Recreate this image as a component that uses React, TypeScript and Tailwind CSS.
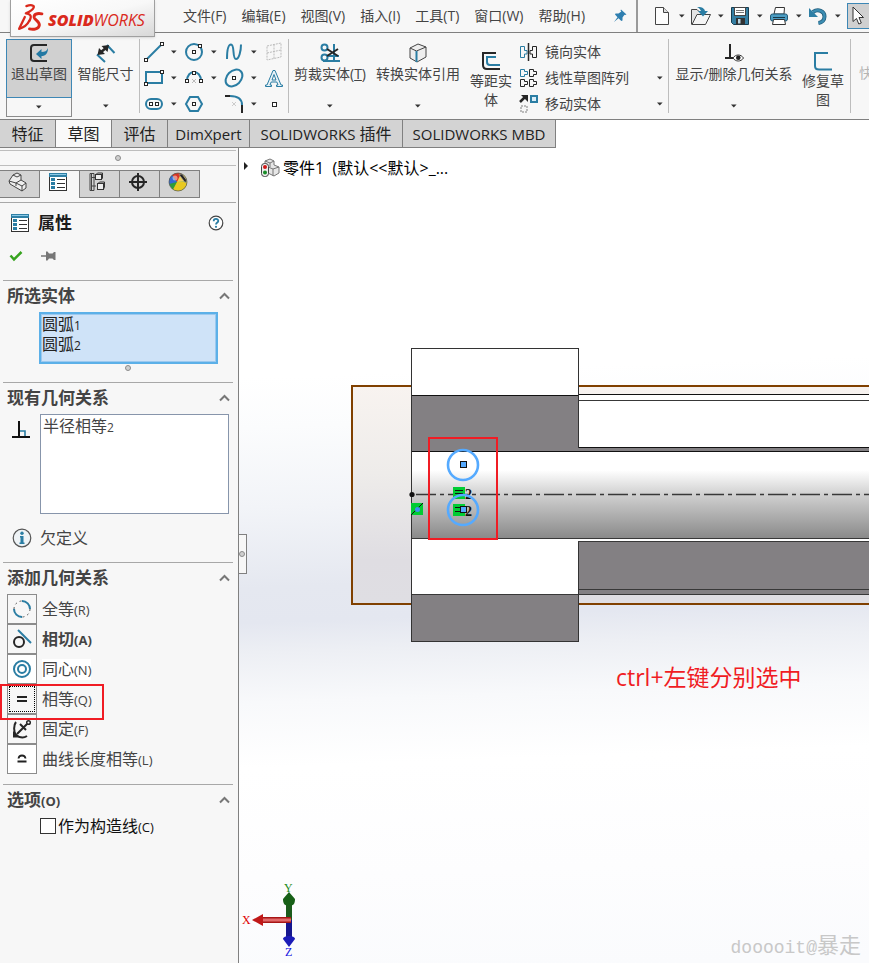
import type { ReactNode } from "react";

const BLUE = "#2a7da3";
const DARK = "#262626";

function Icon({ children, size = 20, label }: { children: ReactNode; size?: number; label?: string }) {
  return (
    <svg width={size} height={size} viewBox="0 0 20 20" fill="none" className="shrink-0" role="img" aria-label={label}>
      {children}
    </svg>
  );
}

/** Small square handle used on sketch entities. */
function Pt({ x, y }: { x: number; y: number }) {
  return <rect x={x - 1.5} y={y - 1.5} width="3" height="3" fill="#fff" stroke={DARK} />;
}

function Caret() {
  return (
    <svg width="6" height="4" viewBox="0 0 6 4" className="shrink-0">
      <path d="M0 0.5H5.6L2.8 3.5Z" fill="#333" />
    </svg>
  );
}

function Dot() {
  return <span className="block size-[6px] rounded-full border border-[#8c8c8c] bg-[#cfcfcf]" />;
}

/* ---------- Icons ---------- */

const newDoc = (
  <Icon>
    <path d="M3.5 1.5H11.5L16.5 6.5V18.5H3.5Z" fill="#fdfdfd" stroke="#444" />
    <path d="M11.5 1.5V6.5H16.5" fill="#ddd" stroke="#444" />
  </Icon>
);
const openDoc = (
  <Icon>
    <path d="M.5 18.5V3.5H6L8 5.5H13.5V8" fill="#e4e4e4" stroke="#444" />
    <path d="M1 18.5L6 8.5H19.5L14.5 18.5Z" fill="#f5f5f5" stroke="#444" />
    <path d="M6 1C10 .5 13.500 2 14 5H17L12 10.500L7 5H10C9.500 3.500 8 2 6 1Z" fill={BLUE} />
  </Icon>
);
const saveDoc = (
  <Icon>
    <path d="M1.500 1.500H18.500V18.500H3.500L1.500 16.500Z" fill="#357fa3" stroke="#173d50" />
    <rect x="4.500" y="1.500" width="11" height="8" fill="#fff" stroke="#444" />
    <path d="M6 4.500H14M6 6.500H14" stroke="#777" />
    <rect x="6" y="12" width="9" height="6.500" fill="#333" />
    <rect x="8" y="13" width="2.500" height="4.500" fill="#b9d6e4" />
  </Icon>
);
const printDoc = (
  <Icon>
    <path d="M5 8L6.500 1.500H15.500L15 8Z" fill="#fff" stroke="#333" />
    <rect x="1.500" y="8" width="17" height="7" rx="2" fill="#4b9cc2" stroke="#235a76" />
    <path d="M4 11.500H16" stroke="#16384a" />
    <path d="M4.500 13.500H15.500L16.500 18.500H3.500Z" fill="#fff" stroke="#333" />
  </Icon>
);
const undo = (
  <Icon>
    <path d="M5 6C10 2.500 16.500 5 16.500 10.500C16.500 14 14 16.500 10.500 17" stroke="#235f7e" strokeWidth="4" />
    <path d="M5 6C10 2.500 16.500 5 16.500 10.500C16.500 14 14 16.500 10.500 17" stroke="#3c8db2" strokeWidth="2.400" />
    <path d="M1 2V11H10Z" fill="#2f7fa5" />
  </Icon>
);
const pointer = (
  <Icon>
    <path d="M5 1V15.500L8.500 12.500L10.800 18L13.300 17L11 11.500H15.500Z" fill="#fff" stroke="#333" />
  </Icon>
);

const line = (
  <Icon>
    <path d="M2 18L18 2" stroke={BLUE} strokeWidth="2" />
    <Pt x={2} y={18} />
    <Pt x={18} y={2} />
  </Icon>
);
const rectangle = (
  <Icon>
    <path d="M2 4H18V15H2Z" stroke={BLUE} strokeWidth="2" />
    <Pt x={2} y={16} />
    <Pt x={18} y={4} />
  </Icon>
);
const slot = (
  <Icon>
    <rect x="2" y="5" width="16" height="10" rx="5" stroke={BLUE} strokeWidth="2" />
    <Pt x={7} y={10} />
    <Pt x={13} y={10} />
  </Icon>
);
const circle = (
  <Icon>
    <circle cx="10" cy="10" r="8" stroke={BLUE} strokeWidth="2" />
    <Pt x={10} y={10} />
    <Pt x={16} y={4} />
  </Icon>
);
const arc = (
  <Icon>
    <path d="M3 13C3 1 17 1 17 13" stroke={BLUE} strokeWidth="2" />
    <path d="M8 11L12 15M12 11L8 15" stroke="#bbb" />
    <Pt x={3} y={13} />
    <Pt x={17} y={13} />
    <Pt x={10} y={5} />
  </Icon>
);
const polygon = (
  <Icon>
    <path d="M2 10L6 3H14L18 10L14 17H6Z" stroke={BLUE} strokeWidth="2" />
    <Pt x={10} y={10} />
  </Icon>
);
const spline = (
  <Icon>
    <path d="M3 17C3 10 4 2.500 7 2.500C11 2.500 8 17 12 17C15 17 17 9 17 2.500" stroke={BLUE} strokeWidth="2" />
  </Icon>
);
const ellipse = (
  <Icon>
    <ellipse cx="10" cy="10" rx="9.600" ry="7" transform="rotate(-45 10 10)" stroke={BLUE} strokeWidth="2" />
    <Pt x={10} y={10} />
  </Icon>
);
const fillet = (
  <Icon>
    <path d="M1 2H6" stroke={DARK} strokeWidth="2" />
    <path d="M6 2C14 2 18 5 18 11" stroke={BLUE} strokeWidth="2" />
    <path d="M18 11V19" stroke={DARK} strokeWidth="2" />
    <path d="M8 8L12 12M12 8L8 12" stroke="#ccc" />
  </Icon>
);
const planeIcon = (
  <Icon>
    <path d="M3 4L17 1V15L3 18ZM10 2.500V16.500M3 11L17 8" stroke="#bbb" strokeDasharray="2 1" />
  </Icon>
);
const textIcon = (
  <Icon>
    <path
      fillRule="evenodd"
      d="M9 2.500H11L17 17H18.500V18.500H12.500V17H14L12.800 14H7.200L6 17H7.500V18.500H1.500V17H3ZM8 12H12L10 6.500Z"
      fill="#e9f2f7"
      stroke={BLUE}
    />
  </Icon>
);
const pointIcon = (
  <Icon>
    <rect x="8.500" y="8.500" width="4" height="4" fill="#fff" stroke={DARK} />
  </Icon>
);

const exitSketch = (
  <Icon>
    <path d="M18 2H5C3 2 2 3 2 5V15C2 17 3 18 5 18H18" stroke={DARK} strokeWidth="2" />
    <path d="M19 5C19 10.500 16.500 13 12.500 13V16L7 11L12.500 6V9C15.500 9 18 8 19 5Z" fill="#2278a3" />
  </Icon>
);
const dimension = (
  <Icon>
    <path d="M1 11.500L9 19M11 2L18.500 10" stroke={BLUE} strokeWidth="2" />
    <path d="M4 10L11 4" stroke={DARK} strokeWidth="2.500" />
    <path d="M1.500 12L3 5L9 11ZM13 2L11.500 9L5.500 3Z" fill={DARK} />
  </Icon>
);
const trim = (
  <Icon>
    <path d="M14 1V19M3 18H20M8 13H19" stroke={BLUE} strokeWidth="2" />
    <circle cx="4.500" cy="4.500" r="3" stroke={BLUE} strokeWidth="2" />
    <circle cx="4.500" cy="14.500" r="3" stroke={BLUE} strokeWidth="2" />
    <path d="M7 6L18 13M7 13L18 6" stroke={DARK} strokeWidth="2" />
  </Icon>
);
const convert = (
  <Icon>
    <path d="M2 5L10 1L18 4V14L9 19L2 15Z" fill="#eee" stroke="#444" />
    <path d="M2 5L8.500 8L18 4" stroke="#444" />
    <path d="M8.500 8V19" stroke={BLUE} strokeWidth="2" />
  </Icon>
);
const offset = (
  <Icon>
    <path d="M15 2H2V14C2 17 4 18 6 18H19" stroke={DARK} strokeWidth="2" />
    <path d="M15 6H6V11C6 13 7 14 9 14H19" stroke={BLUE} strokeWidth="2" />
  </Icon>
);
const repair = (
  <Icon>
    <path d="M15 2H2V15C2 17.500 3.500 18.500 6 18.500H19" stroke={BLUE} strokeWidth="2" />
  </Icon>
);
const mirror = (
  <Icon>
    <path d="M1.500 4.500H5.500V8.500H8V12H5.500V15.500H1.500Z" stroke={BLUE} />
    <path d="M9.500 1V19" stroke={DARK} strokeWidth="1.500" />
    <path d="M17.500 4.500H13.500V8.500H11V12H13.500V15.500H17.500Z" stroke={DARK} />
  </Icon>
);
const pattern = (
  <Icon>
    <path d="M1.500 1.500H5.500V3.500H8.500V6.500H5.500V8.500H1.500Z" stroke={BLUE} />
    <path
      d="M10.500 1.500H14.500V3.500H17.500V6.500H14.500V8.500H10.500ZM1.500 11.500H5.500V13.500H8.500V16.500H5.500V18.500H1.500ZM10.500 11.500H14.500V13.500H17.500V16.500H14.500V18.500H10.500Z"
      stroke={DARK}
    />
  </Icon>
);
const move = (
  <Icon>
    <path d="M1 8L6 3" stroke={DARK} strokeWidth="2.500" />
    <path d="M2 1H9V8Z" fill={DARK} />
    <rect x="12" y="2" width="6" height="6" fill="#d9edf7" stroke={BLUE} strokeWidth="2" />
    <rect x="2" y="12" width="6" height="6" stroke="#bbb" strokeWidth="2" strokeDasharray="2 1" />
  </Icon>
);
const relations = (
  <Icon>
    <path d="M6 1V15M1 15H9" stroke={DARK} strokeWidth="2" />
    <path d="M9 15C11.500 11 17 11 19.500 15C17 19 11.500 19 9 15Z" fill="#fff" stroke="#333" />
    <circle cx="14.300" cy="14.800" r="2.300" fill="#222" />
  </Icon>
);

const partIcon = (
  <Icon>
    <path d="M1 9L5 3L9 1L13 3V8L18 11V16L14 19L2 12Z" fill="#eee" stroke="#444" />
    <path d="M1 9L8 11L13 8M8 11V14M5 3L9 5L13 3M8 11L14 14L18 11M14 14V19" stroke="#444" />
  </Icon>
);
const listIcon = (
  <Icon>
    <rect x="1.500" y="1.500" width="17" height="17" fill="#fff" stroke="#333" />
    <rect x="1" y="1" width="18" height="4" fill="#2f80a6" />
    <path d="M2 2.500H18" stroke="#8cc9e6" />
    <path d="M3 7.500H7M3 11.500H7M3 15.500H7" stroke={BLUE} strokeWidth="3" />
    <path d="M9 7.500H17M9 11.500H17M9 15.500H17" stroke="#333" />
  </Icon>
);
const configIcon = (
  <Icon>
    <path d="M3.500 1V18.500M3.500 5.500H7M3.500 14H8M2 1.500H6V18.500H2Z" stroke="#444" />
    <rect x="7.500" y="2.500" width="6" height="5" fill="#eee" stroke="#333" />
    <path d="M8 2.500L9.500 1H14.500V6L13.500 7.500" stroke="#333" />
    <rect x="9.500" y="11.500" width="6" height="6" fill="#eee" stroke="#333" />
    <path d="M10 11.500L11.500 10H16.500V15.500L15.500 17" stroke="#333" />
  </Icon>
);
const targetIcon = (
  <Icon>
    <circle cx="10" cy="10" r="6" stroke={DARK} strokeWidth="2" />
    <path d="M10 1V19M1 10H19" stroke={DARK} strokeWidth="2" />
  </Icon>
);
const appearanceIcon = (
  <Icon>
    <circle cx="10" cy="10" r="9" fill="#2e9c3a" />
    <path d="M9 10L8 1.200A9 9 0 0 1 19 9.500Z" fill="#f0cf5a" />
    <path d="M9 10L4 3.300A9 9 0 0 1 13 1.500Z" fill="#d63425" />
    <path d="M9 10L1.200 12A9 9 0 0 1 4 3.300Z" fill="#3569d4" />
    <path d="M9 10L19 10A9 9 0 0 1 5 17.500Z" fill="#e8c920" />
    <circle cx="7" cy="6" r="2.500" fill="#fff" opacity=".45" />
    <path d="M11 2.500L14 2L18.500 8L17.500 11Z" fill="#222" stroke="#aaa" strokeWidth=".6" />
    <circle cx="10" cy="10" r="9" stroke="#555" strokeWidth=".7" />
  </Icon>
);
const perpendicular = (
  <Icon>
    <path d="M8 12H14V17" stroke={BLUE} strokeWidth="1.600" />
    <path d="M8 2V17M1 18H19" stroke="#111" strokeWidth="2" />
  </Icon>
);

const relationItems = [
  {
    id: "congruent",
    name: "全等",
    key: "(R)",
    icon: (
      <Icon>
        <path d="M10 2A8 8 0 0 1 18 10M2 10A8 8 0 0 0 10 18" stroke={BLUE} strokeWidth="2" />
        <path d="M2 10A8 8 0 0 1 10 2M18 10A8 8 0 0 1 10 18" stroke="#555" strokeDasharray="2 3" />
      </Icon>
    ),
  },
  {
    id: "tangent",
    name: "相切",
    key: "(A)",
    icon: (
      <Icon>
        <path d="M6 1L19 14" stroke={BLUE} strokeWidth="2" />
        <circle cx="7" cy="13" r="5" stroke={DARK} strokeWidth="2" />
      </Icon>
    ),
  },
  {
    id: "concentric",
    name: "同心",
    key: "(N)",
    icon: (
      <Icon>
        <circle cx="10" cy="10" r="8" stroke={BLUE} strokeWidth="2" />
        <circle cx="10" cy="10" r="4" stroke={BLUE} strokeWidth="2" />
      </Icon>
    ),
  },
  {
    id: "equal",
    name: "相等",
    key: "(Q)",
    icon: (
      <Icon>
        <path d="M5 8H15M5 12H15" stroke="#222" strokeWidth="2" />
      </Icon>
    ),
  },
  {
    id: "fix",
    name: "固定",
    key: "(F)",
    icon: (
      <Icon>
        <path d="M5 15L15 5M8 5L14 11" stroke={DARK} strokeWidth="2" />
        <circle cx="16.500" cy="3.500" r="1.800" stroke={DARK} strokeWidth="1.500" />
        <path d="M4 3C1.500 6 1.500 13 4 16C8 19 12 19 15 17" stroke={DARK} strokeWidth="2" />
        <path d="M1 12L8 18.500H1Z" fill={DARK} />
      </Icon>
    ),
  },
  {
    id: "curve",
    name: "曲线长度相等",
    key: "(L)",
    icon: (
      <Icon>
        <path d="M6.500 9.500C7 5.500 13 5.500 13.500 9.500M5.500 12.500H14.500" stroke="#222" strokeWidth="1.800" />
      </Icon>
    ),
  },
];

/* ---------- Top bar ---------- */

const menus = ["文件(F)", "编辑(E)", "视图(V)", "插入(I)", "工具(T)", "窗口(W)", "帮助(H)"];
const quick = [
  { label: "新建", icon: newDoc },
  { label: "打开", icon: openDoc },
  { label: "保存", icon: saveDoc },
  { label: "打印", icon: printDoc },
  { label: "撤消", icon: undo },
];

function TopBar() {
  return (
    <header className="relative flex h-[33px] shrink-0 items-center border-b border-[#808080] bg-[#f7f7f7]">
      <div className="absolute top-0 left-[10px] z-10 flex h-[37px] w-[145px] items-center gap-[4px] border border-t-0 border-[#a0a0a0] bg-linear-to-br from-white via-[#f8f8f8] to-[#d8d8d8] pl-[4px] shadow-sm">
        <svg
          width="29"
          height="29"
          viewBox="0 0 28 28"
          fill="none"
          stroke="#da291c"
          strokeLinecap="round"
          strokeLinejoin="round"
          className="shrink-0"
        >
          <path d="M11 2C15 .5 19 1 18 3.500C17 6 13 8 10.500 9C15 9.500 16.500 12 14 16" strokeWidth="2.200" />
          <path d="M9.500 12.500L4 24C8 23 12 20 14 16" strokeWidth="2.200" />
          <path d="M26 9.500C21 8.500 18 10 18.500 13C19 15.500 24 17 23.500 20.500C23 24 18 25 14 24" strokeWidth="2.800" />
        </svg>
        <span className="pt-[4px] text-base leading-5 text-[#da291c] italic">
          <b className="font-extrabold">SOLID</b>WORKS
        </span>
      </div>
      <nav className="ml-[183px] flex shrink-0 gap-[15px]">
        {menus.map((m) => (
          <button key={m} type="button" className="text-sm whitespace-nowrap text-[#444]">
            {m}
          </button>
        ))}
      </nav>
      <button type="button" aria-label="固定" className="ml-[28px] shrink-0">
        <svg width="14" height="14" viewBox="0 0 14 14" fill="#2f7fb0">
          <path d="M8 0.500L13.500 5.500L12 6L11.500 5.700L9.500 8.500L9.500 11.500L8.300 12L5.500 9.300L1 13L4.500 8.200L2 5.500L2.500 4.500H5.500L8.300 2.500L7.500 1.500Z" />
        </svg>
      </button>
      <div className="ml-[9px] flex h-8 min-w-0 flex-1 items-center overflow-hidden border-l-2 border-[#9a9a9a] pl-[14px]">
        {quick.map((q) => (
          <button key={q.label} type="button" aria-label={q.label} className="flex w-[39px] shrink-0 items-center gap-[7px]">
            {q.icon}
            <Caret />
          </button>
        ))}
        <button type="button" aria-label="选择" className="flex h-[26px] w-[28px] shrink-0 items-center border border-[#3d87b5] bg-[#d0d0d0]">
          {pointer}
        </button>
      </div>
    </header>
  );
}

/* ---------- Ribbon ---------- */

function Separator() {
  return <span className="my-[6px] w-px shrink-0 bg-[#bdbdbd]" />;
}

function BigTool({ icon, children, width }: { icon: ReactNode; children: ReactNode; width: string }) {
  return (
    <button type="button" className={`flex shrink-0 flex-col items-center pt-[10px] ${width}`}>
      {icon}
      <span className="text-sm leading-[22px] whitespace-nowrap">{children}</span>
      <span className="mt-[19px]">
        <Caret />
      </span>
    </button>
  );
}

function TallTool({ icon, children }: { icon: ReactNode; children: ReactNode }) {
  return (
    <button type="button" className="flex w-[44px] shrink-0 flex-col items-center pt-[18px] text-sm leading-[19px]">
      {icon}
      {children}
    </button>
  );
}

const sketchTools = [
  { label: "直线", icon: line },
  { label: "圆", icon: circle },
  { label: "样条曲线", icon: spline },
  { label: "基准面", icon: planeIcon, single: true },
  { label: "矩形", icon: rectangle },
  { label: "圆弧", icon: arc },
  { label: "椭圆", icon: ellipse },
  { label: "文字", icon: textIcon, single: true },
  { label: "槽口", icon: slot },
  { label: "多边形", icon: polygon, single: true },
  { label: "圆角", icon: fillet },
  { label: "点", icon: pointIcon, single: true },
];

const listTools = [
  { label: "镜向实体", icon: mirror, caret: false },
  { label: "线性草图阵列", icon: pattern, caret: true },
  { label: "移动实体", icon: move, caret: true },
];

function Ribbon() {
  return (
    <div className="flex h-[87px] shrink-0 overflow-hidden border-b border-[#808080] bg-[#f7f7f7] text-[#444]">
      <div className="mt-[6px] ml-[6px] flex h-[78px] w-[66px] shrink-0 flex-col">
        <button type="button" className="flex h-[59px] flex-col items-center border border-[#3d87b5] bg-[#d0d0d0] pt-[3px]">
          {exitSketch}
          <span className="text-sm leading-[22px] whitespace-nowrap">退出草图</span>
        </button>
        <button type="button" aria-label="退出草图选项" className="flex flex-1 items-center justify-center border border-t-0 border-[#8c8c8c]">
          <Caret />
        </button>
      </div>
      <BigTool icon={dimension} width="w-[67px]">
        智能尺寸
      </BigTool>
      <Separator />
      <div className="mt-[6px] ml-[4px] grid h-[78px] shrink-0 grid-cols-[40px_40px_40px_24px] grid-rows-3">
        {sketchTools.map((t) => (
          <button key={t.label} type="button" aria-label={t.label} className="flex items-center gap-[7px]">
            {t.icon}
            {!t.single && <Caret />}
          </button>
        ))}
      </div>
      <Separator />
      <BigTool icon={trim} width="w-[82px]">
        剪裁实体(<u>T</u>)
      </BigTool>
      <BigTool icon={convert} width="w-[94px]">
        转换实体引用
      </BigTool>
      <div className="ml-[4px] flex">
        <TallTool icon={offset}>
          等距实
          <br />体
        </TallTool>
      </div>
      <div className="mt-[6px] ml-[6px] grid h-[78px] w-[149px] shrink-0 grid-rows-3">
        {listTools.map((t) => (
          <button key={t.label} type="button" className="flex items-center gap-[6px] pr-[5px] text-sm whitespace-nowrap">
            {t.icon}
            <span className="flex-1 text-left">{t.label}</span>
            {t.caret && <Caret />}
          </button>
        ))}
      </div>
      <Separator />
      <BigTool icon={relations} width="w-[130px]">
        显示/删除几何关系
      </BigTool>
      <div className="ml-[2px] flex">
        <TallTool icon={repair}>
          修复草
          <br />图
        </TallTool>
      </div>
      <span className="w-[5px] shrink-0" />
      <Separator />
      <button type="button" disabled className="ml-[8px] shrink-0 pb-[6px] text-sm whitespace-nowrap text-[#b5b5b5]">
        快
      </button>
    </div>
  );
}

function TabButton({ children, width, active }: { children: ReactNode; width: string; active?: boolean }) {
  return (
    <button
      type="button"
      role="tab"
      aria-selected={!!active}
      className={`shrink-0 border-r border-[#808080] text-base leading-6 whitespace-nowrap text-[#222] ${width} ${
        active ? "bg-[#f9f9f9]" : "bg-[#d3d3d3]"
      }`}
    >
      {children}
    </button>
  );
}

function RibbonTabs() {
  return (
    <div role="tablist" className="flex h-7 shrink-0 bg-white">
      <div className="flex h-7 border-b border-[#808080]">
        <TabButton width="w-[56px]">特征</TabButton>
        <TabButton width="w-[56px]" active>
          草图
        </TabButton>
        <TabButton width="w-[56px]">评估</TabButton>
        <TabButton width="w-[82px]">
          <span className="text-[15px]">DimXpert</span>
        </TabButton>
        <TabButton width="w-[153px]">
          <span className="text-[15px]">SOLIDWORKS</span> 插件
        </TabButton>
        <TabButton width="w-[153px]">
          <span className="text-[15px]">SOLIDWORKS MBD</span>
        </TabButton>
      </div>
    </div>
  );
}

/* ---------- Property panel ---------- */

function Section({ title, hint, children, className = "" }: { title: string; hint?: string; children: ReactNode; className?: string }) {
  return (
    <section className={`mr-[5px] ml-[3px] border-t border-[#a8a8a8] ${className}`}>
      <h2 className="flex h-[31px] items-center justify-between pr-[3px] pb-px pl-[4px] text-[17px] font-bold text-[#444]">
        <span>
          {title}
          {hint && <span className="text-[13px]">{hint}</span>}
        </span>
        <button type="button" aria-label="折叠">
          <svg width="11" height="8" viewBox="0 0 11 8" fill="none">
            <path d="M1 6.500L5.500 2L10 6.500" stroke="#777" strokeWidth="2" />
          </svg>
        </button>
      </h2>
      {children}
    </section>
  );
}

const panelTabs = [
  { label: "设计树", icon: partIcon },
  { label: "属性", icon: listIcon },
  { label: "配置", icon: configIcon },
  { label: "尺寸", icon: targetIcon },
  { label: "外观", icon: appearanceIcon },
];

function Panel() {
  return (
    <aside className="w-[239px] shrink-0 border-r border-[#808080] bg-[#f7f7f7] pt-[2px] text-[#444]">
      <div className="mr-[2px] flex h-4 items-center justify-center border-y border-[#bdbdbd]">
        <Dot />
      </div>
      <div role="tablist" className="mt-[4px] flex">
        {panelTabs.map((t) => (
          <button
            key={t.label}
            type="button"
            role="tab"
            aria-label={t.label}
            aria-selected={t.label === "属性"}
            className={`flex h-7 w-10 items-start justify-center border-t border-r border-[#808080] pt-[1px] pr-[3px] ${
              t.label === "属性" ? "" : "border-b bg-[#d3d3d3]"
            }`}
          >
            {t.icon}
          </button>
        ))}
      </div>
      <div className="mt-[4px] mr-[2px] flex h-[41px] items-center border-t border-[#a8a8a8] pr-[12px] pl-[10px]">
        {listIcon}
        <h1 className="ml-[8px] flex-1 text-[17px] font-bold text-[#1c1c1c]">属性</h1>
        <button type="button" aria-label="帮助">
          <svg width="16" height="16" viewBox="0 0 16 16" fill="none">
            <circle cx="8" cy="8" r="6.800" fill="#fff" stroke="#444" strokeWidth="1.200" />
            <path d="M5.700 6.200C5.700 3.200 10.300 3.200 10.300 6C10.300 7.600 8 7.600 8 9.600" stroke={BLUE} strokeWidth="1.800" />
            <circle cx="8" cy="11.800" r="1.100" fill={BLUE} />
          </svg>
        </button>
      </div>
      <div className="mb-[11px] flex h-[26px] items-center gap-[18px] pl-[9px]">
        <button type="button" aria-label="确定">
          <svg width="14" height="12" viewBox="0 0 14 12" fill="none">
            <path d="M1.500 5.500L5 9.500L12.500 2" stroke="#36a31e" strokeWidth="2.500" />
          </svg>
        </button>
        <button type="button" aria-label="保持可见">
          <svg width="15" height="12" viewBox="0 0 15 12">
            <path d="M0 5.300H5V1.500H6.500L8 3.500H11.500L13 2H14.500V10H13L11.500 8.500H8L6.500 10.500H5V6.700H0Z" fill="#777" />
          </svg>
        </button>
      </div>

      <Section title="所选实体" className="pb-[10px]">
        <ul
          role="listbox"
          aria-label="所选实体"
          className="mr-[15px] ml-[36px] h-[52px] border-2 border-[#5cb0e8] bg-[#cfe3f8] px-[1px] text-base leading-5 text-[#222] inset-ring inset-ring-[#9cc9ef]"
        >
          {["1", "2"].map((n) => (
            <li key={n} role="option" aria-selected="true">
              圆弧<span className="text-xs">{n}</span>
            </li>
          ))}
        </ul>
        <div className="flex h-[8px] items-center justify-center pl-[20px]">
          <Dot />
        </div>
      </Section>

      <Section title="现有几何关系">
        <div className="flex items-start pl-[8px]">
          <div className="mt-[5px] mr-[9px]">{perpendicular}</div>
          <ul
            role="listbox"
            aria-label="现有几何关系"
            className="mr-[4px] h-[100px] flex-1 border border-[#8795ab] bg-white px-[2px] text-base leading-[22px] text-[#444]"
          >
            <li role="option" aria-selected="false">
              半径相等<span className="text-xs">2</span>
            </li>
          </ul>
        </div>
        <p className="flex h-12 items-center gap-[8px] pl-[9px] text-base">
          <svg width="20" height="20" viewBox="0 0 20 20">
            <circle cx="10" cy="10" r="8.800" fill="#eef3f6" stroke="#555" strokeWidth="1.200" />
            <path d="M8 8H11.500V14.500H12.500V16H7.500V14.500H8.500V9.500H8Z" fill={BLUE} />
            <circle cx="10" cy="5.200" r="1.700" fill={BLUE} />
          </svg>
          欠定义
        </p>
      </Section>

      <Section title="添加几何关系" className="pb-[10px]">
        {relationItems.map((r) => (
          <div key={r.id} className="relative flex h-[30px] items-center pl-[4px]">
            <button
              id={r.id}
              type="button"
              className={`flex size-[30px] items-center justify-center border border-[#8c8c8c] ${
                r.id === "concentric" || r.id === "curve" ? "bg-white" : "bg-[#f7f7f7]"
              }`}
            >
              {r.id === "equal" ? (
                <span className="flex size-[26px] items-center justify-center border border-dotted border-black">{r.icon}</span>
              ) : (
                r.icon
              )}
            </button>
            <label
              htmlFor={r.id}
              className={`ml-[5px] text-base leading-5 whitespace-nowrap ${r.id === "tangent" ? "font-bold" : ""} ${
                r.id === "concentric" ? "bg-white" : ""
              }`}
            >
              {r.name}
              <span className="text-[13px]">{r.key}</span>
            </label>
            {r.id === "equal" && (
              <span className="pointer-events-none absolute top-0 -left-[3px] z-10 h-9 w-[104px] border-2 border-[#f01c24]" />
            )}
          </div>
        ))}
      </Section>

      <Section title="选项" hint="(O)">
        <label className="flex h-5 items-center gap-[2px] pl-[37px] text-base text-[#111]">
          <input type="checkbox" className="size-4 appearance-none border border-[#333] bg-white" />
          <span>
            作为构造线<span className="text-[13px]">(C)</span>
          </span>
        </label>
      </Section>
    </aside>
  );
}

/* ---------- Graphics area ---------- */

function Model() {
  return (
    <svg width="1600" height="815" viewBox="239 148 1600 815" fill="none" className="absolute top-0 left-0">
      <defs>
        <linearGradient id="cyl" x1="0" y1="0" x2="0" y2="1">
          <stop offset="0" stopColor="#fff" />
          <stop offset=".22" stopColor="#fff" />
          <stop offset=".5" stopColor="#d0d0d0" />
          <stop offset="1" stopColor="#8a8a8a" />
        </linearGradient>
        <linearGradient id="plane" x1="0" y1="0" x2="0" y2="1">
          <stop offset="0" stopColor="#f8f3f0" />
          <stop offset=".4" stopColor="#eeecea" />
          <stop offset=".8" stopColor="#dfdde2" />
          <stop offset="1" stopColor="#dfdee3" />
        </linearGradient>
        <linearGradient id="red" x1="0" y1="0" x2="0" y2="1">
          <stop offset="0" stopColor="#900" />
          <stop offset=".5" stopColor="#f08080" />
          <stop offset="1" stopColor="#900" />
        </linearGradient>
      </defs>

      {/* reference plane */}
      <rect x="352" y="386" width="1600" height="218" fill="url(#plane)" stroke="#804000" strokeWidth="2" />

      {/* flange and the shaft to its right */}
      <g shapeRendering="crispEdges">
        <rect x="578" y="394" width="1300" height="54" fill="#fff" />
        <rect x="578" y="448" width="1300" height="4" fill="#838083" />
        <rect x="411" y="348" width="168" height="48" fill="#fff" />
        <rect x="411" y="395" width="168" height="57" fill="#838083" />
        <rect x="411" y="451" width="1500" height="87" fill="url(#cyl)" />
        <rect x="411" y="538" width="168" height="56" fill="#fff" />
        <rect x="578" y="538" width="1300" height="5" fill="#fff" />
        <rect x="578" y="542" width="1300" height="53" fill="#838083" />
        <rect x="411" y="594" width="168" height="48" fill="#838083" />
        <path d="M411 395.500H578M411 451.500H1900M578 394.500H1900M578 447.500H1900" stroke="#111" />
        <path d="M578 400.500H1900M411 538.500H1900M578 541.500H1900M578 589.500H1900M411 594.500H1900" stroke="#383838" />
        <path d="M411.500 348.500H578.500V448M411.500 348V641.500H578.500V542" stroke="#333" />
      </g>

      <path d="M416 494.500H1900" stroke="#383838" strokeWidth="1.300" strokeDasharray="20 4 4 4" />
      <circle cx="412" cy="494.500" r="2.600" fill="#111" />

      {/* relation glyphs */}
      <rect x="411" y="503" width="12" height="12" fill="#00cc33" />
      <path d="M411 515L423 503" stroke="#111" />
      <circle cx="417.500" cy="509.500" r="2.500" fill="#4090f0" />
      <rect x="453" y="487" width="12" height="12" fill="#00cc33" />
      <path d="M455 490.500H463M455 493.500H463" stroke="#111" />
      <rect x="453" y="504" width="12" height="12" fill="#00cc33" />
      <path d="M455 507.500H463M455 511.500H463" stroke="#111" />
      <g fontSize="14" fontWeight="bold" fill="#111" className="font-['Liberation_Serif',serif]">
        <text x="465" y="499">2</text>
        <text x="465" y="516">2</text>
      </g>

      {/* selected circles */}
      <circle cx="463" cy="465" r="15" stroke="#55aaff" strokeWidth="2.600" />
      <circle cx="463" cy="510" r="15" stroke="#55aaff" strokeWidth="2.600" />
      <rect x="460.500" y="461.500" width="6" height="6" fill="#55aaff" stroke="#111" />
      <rect x="460.500" y="506.500" width="6" height="6" fill="#55aaff" stroke="#111" />
      <rect x="429" y="438" width="68" height="101" stroke="#f01c24" strokeWidth="2" />
    </svg>
  );
}

function Triad() {
  return (
    <svg width="60" height="80" viewBox="0 0 60 80" className="absolute top-[732px] left-0">
      <g className="font-['Liberation_Serif',serif]" fontSize="12">
        <text x="45" y="12" fill="#1c8c1c">Y</text>
        <text x="3" y="44" fill="#e00000">X</text>
        <text x="46" y="76" fill="#1515e0">Z</text>
      </g>
      <path d="M47 16H53V40H47Z" fill="#1c5c1c" />
      <path d="M50 12L56 19C56 24 54 26 50 26C46 26 44 24 44 19Z" fill="#176017" />
      <path d="M47 40H53V60H47Z" fill="#16168f" />
      <path d="M44 59C44 55 56 55 56 59L50 67Z" fill="#1c1cb8" />
      <rect x="22" y="37" width="30" height="6" fill="url(#red)" />
      <path d="M13 40L24 34V46Z" fill="#c01818" />
    </svg>
  );
}

function Viewport() {
  return (
    <main className="relative min-w-0 flex-1 overflow-hidden bg-[linear-gradient(178deg,#ffffff_0px,#ffffff_230px,#fbfcfd_280px,#f2f4f8_360px,#e5e8f0_440px,#e4e7f0_475px,#edeff4_505px,#f8f9fb_555px,#ffffff_620px,#fdfdfe_730px,#fafbfd_830px)]">
      <Model />
      <div className="relative flex h-10 items-center pl-[4px] text-base whitespace-nowrap text-black">
        <svg width="6" height="8" viewBox="0 0 6 8" className="mb-[4px]">
          <path d="M1 0L5 4L1 8Z" fill="#222" />
        </svg>
        <svg width="20" height="20" viewBox="0 0 20 20" className="mr-[3px] ml-[11px]">
          <path d="M5 3L10 1L14 3V7L19 9V15L14 18L8 15V9L5 8Z" fill="#e6e6e6" stroke="#777" />
          <path d="M5 3L10 5L14 3M10 5V9M8 9L13 11L19 9M13 11V18" fill="none" stroke="#777" />
          <rect x="1.500" y="5.500" width="7" height="13" rx="3" fill="#eee" stroke="#444" />
          <circle cx="5" cy="9" r="2" fill="#d01818" />
          <circle cx="5" cy="14.500" r="2" fill="#188c28" />
        </svg>
        <span className="whitespace-pre">零件1  (默认&lt;&lt;默认&gt;_...</span>
      </div>
      <div className="absolute top-[386px] -left-px flex h-10 w-[9px] items-center justify-center border border-l-0 border-[#808080] bg-[#f7f7f7]">
        <Dot />
      </div>
      <p className="absolute top-[513px] left-[377px] text-[23px] leading-8 whitespace-nowrap text-[#f01c24]">ctrl+左键分别选中</p>
      <Triad />
      <p className="absolute right-[8px] -bottom-px font-['Liberation_Mono','Noto_Sans_CJK_SC',monospace] text-[#c8c8c8]">
        <span className="text-lg">dooooit@</span>
        <span className="text-[22px]">暴走</span>
      </p>
    </main>
  );
}

export default function App() {
  return (
    <div className="flex min-h-screen flex-col overflow-hidden bg-white font-['Open_Sans','Noto_Sans_CJK_SC',sans-serif]">
      <TopBar />
      <Ribbon />
      <RibbonTabs />
      <div className="flex flex-1">
        <Panel />
        <Viewport />
      </div>
    </div>
  );
}
